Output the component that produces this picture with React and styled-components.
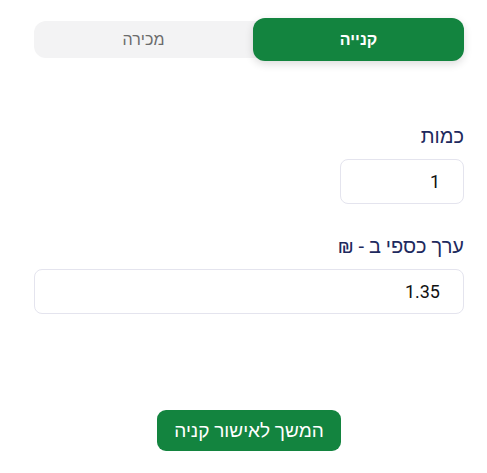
import React, { useState } from "react";
import styled, { createGlobalStyle } from "styled-components";

const GlobalStyle = createGlobalStyle`
  body {
    margin: 0;
    background: #ffffff;
    font-family: Roboto, "Noto Sans", sans-serif;
  }
`;

export default function App() {
  const [mode, setMode] = useState("buy");
  const [amount, setAmount] = useState("1");
  const [value, setValue] = useState("1.35");

  return (
    <>
      <GlobalStyle />
      <Page dir="rtl">
        <Tabs>
          <Tab active={mode === "buy"} onClick={() => setMode("buy")}>
            קנייה
          </Tab>
          <Tab active={mode === "sell"} onClick={() => setMode("sell")}>
            מכירה
          </Tab>
        </Tabs>

        <Field>
          <Label>כמות</Label>
          <Input
            small
            value={amount}
            onChange={(e) => setAmount(e.target.value)}
          />
        </Field>

        <Field>
          <Label>ערך כספי ב - ₪</Label>
          <Input value={value} onChange={(e) => setValue(e.target.value)} />
        </Field>

        <Footer>
          <SubmitButton>המשך לאישור קניה</SubmitButton>
        </Footer>
      </Page>
    </>
  );
}

const Page = styled.div`
  padding: 21px 23px 0 34px;
  display: flex;
  flex-direction: column;
`;

const Tabs = styled.div`
  display: grid;
  grid-template-columns: 211px 1fr;
  grid-template-rows: 37px;
  background: #f3f3f4;
  border-radius: 12px;
  align-items: center;
`;

const Tab = styled.button`
  border: none;
  cursor: pointer;
  font-family: inherit;
  font-size: 16px;
  height: ${(p) => (p.active ? "43px" : "37px")};
  border-radius: 12px;
  background: ${(p) => (p.active ? "#13843f" : "transparent")};
  color: ${(p) => (p.active ? "#ffffff" : "#6b6b6b")};
  font-weight: ${(p) => (p.active ? 700 : 400)};
  box-shadow: ${(p) => (p.active ? "0 3px 8px rgba(0,0,0,0.14)" : "none")};
  padding: 0;
`;

const Field = styled.div`
  display: flex;
  flex-direction: column;
  align-items: flex-start;
  margin-top: 66px;
  & + & {
    margin-top: 30px;
  }
`;

const Label = styled.label`
  color: #1e2a5e;
  font-size: 20px;
  line-height: 24px;
  margin-bottom: 11px;
`;

const Input = styled.input`
  box-sizing: border-box;
  width: ${(p) => (p.small ? "124px" : "100%")};
  height: 45px;
  border: 1px solid #e4e4ee;
  border-radius: 8px;
  padding: 0 23px;
  font-family: inherit;
  font-size: 18px;
  color: #111;
  direction: rtl;
  outline: none;
`;

const Footer = styled.div`
  display: flex;
  justify-content: center;
  margin-top: 96px;
`;

const SubmitButton = styled.button`
  background: #13843f;
  color: #ffffff;
  border: none;
  border-radius: 9px;
  height: 41px;
  padding: 0 17px;
  font-family: inherit;
  font-size: 19px;
  font-weight: 500;
  cursor: pointer;
`;
